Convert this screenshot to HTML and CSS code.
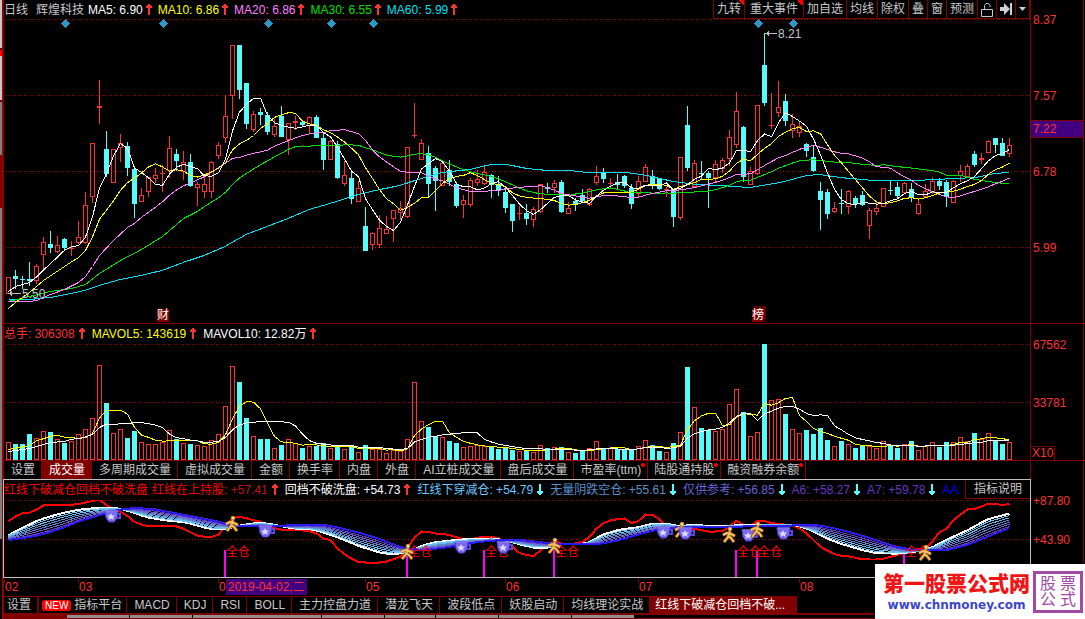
FILE: index.html
```html
<!DOCTYPE html>
<html lang="zh-CN">
<head>
<meta charset="utf-8">
<title>辉煌科技 日线</title>
<link rel="stylesheet" href="styles.css">
</head>
<body>
<svg class="defs" aria-hidden="true">
  <symbol id="up" viewBox="0 0 6 11"><path d="M2 0H4V1H5V2H6V4H4V11H2V4H0V2H1V1H2Z" fill="#ff3232"/></symbol>
  <symbol id="down" viewBox="0 0 6 11"><path d="M2 11H4V10H5V9H6V7H4V0H2V7H0V9H1V10H2Z" fill="#54fcfc"/></symbol>
  <symbol id="cup" viewBox="0 0 18 13">
    <path d="M13 4H16V8H12" fill="none" stroke="#5a48e0" stroke-width="2"/>
    <path d="M1 1H14L13 8L10 12H5L2 8Z" fill="#7a68f0" stroke="#4a3ad0"/>
    <path d="M1 1H14" stroke="#a090ff"/>
    <path d="M7 3L8.200 5.500H11L9 7.500L9.700 10L7 8.600L4.300 10L5 7.500L3 5.500H5.800Z" fill="#dcdcff"/>
  </symbol>
  <symbol id="man" viewBox="0 0 14 16">
    <path d="M8 4L6 10L2 15M6 9L9 11L12 15M1 8L5 6L9 7L13 9" fill="none" stroke="#8a5410" stroke-width="3.500"/>
    <path d="M8 4L6 10L2 15M6 9L9 11L12 15M1 8L5 6L9 7L13 9" fill="none" stroke="#f8c060" stroke-width="2"/>
    <circle cx="8" cy="2" r="2" fill="#ffe080" stroke="#a06a18" stroke-width=".7"/>
  </symbol>
</svg>
<div class="app">
  <div class="edge"></div>
  <main class="main">
    <section class="pane">
      <div class="plot">
        <header class="bar top">
          <div class="legend">
            <span class="name">日线</span><span class="name stock">辉煌科技</span>
            <span class="item white">MA5: 6.90<svg><use href="#up"/></svg></span>
            <span class="item yellow">MA10: 6.86<svg><use href="#up"/></svg></span>
            <span class="item pink">MA20: 6.86<svg><use href="#up"/></svg></span>
            <span class="item green">MA30: 6.55<svg><use href="#up"/></svg></span>
            <span class="item cyan">MA60: 5.99<svg><use href="#up"/></svg></span>
          </div>
          <nav class="tools">
            <button class="flag">九转</button><button class="flag wide">重大事件</button><button>加自选</button><button>均线</button><button>除权</button><button>叠</button><button>窗</button><button>预测</button><button aria-label="锁定"><svg width="12" height="15" viewBox="0 0 12 15"><path d="M.500 7.500H11.500V14.500H.500ZM3.500 7V3.500L5 1.500H7.500L9 3.500V5" fill="none" stroke="#c8c8c8"/></svg></button><button aria-label="末端"><svg width="12" height="12" viewBox="0 0 12 12"><path d="M0 4H4V0L10 6L4 12V8H0ZM10 0H12V12H10Z" fill="#d0d0d0"/></svg></button><button class="slim" aria-label="菜单"><svg width="7" height="4" viewBox="0 0 7 4"><path d="M0 0H7L3.500 4Z" fill="#d0d0d0"/></svg></button>
          </nav>
        </header>
        <div class="chart" id="price"></div>
      </div>
      <div class="axis price-axis">
        <span>8.37</span><span>7.57</span><span>6.78</span><span>5.99</span>
        <b class="last">7.22</b>
      </div>
    </section>
    <section class="pane lined">
      <div class="plot">
        <header class="bar">
          <div class="legend">
            <span class="item red">总手: 306308<svg><use href="#up"/></svg></span>
            <span class="item yellow">MAVOL5: 143619<svg><use href="#up"/></svg></span>
            <span class="item white">MAVOL10: 12.82万<svg><use href="#up"/></svg></span>
          </div>
        </header>
        <div class="chart" id="volume"></div>
      </div>
      <div class="axis volume-axis"><span>67562</span><span>33781</span><b class="scale">X10</b></div>
    </section>
    <section class="pane lined">
      <nav class="tabs">
        <button>设置</button><button class="on">成交量</button><button>多周期成交量</button><button>虚拟成交量</button><button>金额</button><button>换手率</button><button>内盘</button><button>外盘</button><button>AI立桩成交量</button><button>盘后成交量</button><button class="dot">市盈率(ttm)</button><button class="dot">陆股通持股</button><button class="dot">融资融券余额</button>
      </nav>
      <div class="axis"></div>
    </section>
    <section class="pane framed">
      <div class="plot">
        <header class="bar">
          <div class="legend">
            <span class="pure">红线下破减仓回档不破洗盘</span>
            <span class="item deep"><i class="pure">红线在上持股:</i> +57.41<svg><use href="#up"/></svg></span>
            <span class="item white">回档不破洗盘: +54.73<svg><use href="#up"/></svg></span>
            <span class="item sky">红线下穿减仓: +54.79<svg><use href="#down"/></svg></span>
            <span class="item steel">无量阴跌空仓: +55.61<svg><use href="#down"/></svg></span>
            <span class="item slate">仅供参考: +56.85<svg><use href="#down"/></svg></span>
            <span class="item violet">A6: +58.27<svg><use href="#down"/></svg></span>
            <span class="item violet">A7: +59.78<svg><use href="#down"/></svg></span>
            <span class="blue">AA:</span>
          </div>
          <button class="help">指标说明</button>
        </header>
        <div class="chart" id="signal"></div>
      </div>
      <div class="axis signal-axis"><span>+87.80</span><span>+43.90</span></div>
    </section>
    <section class="pane">
      <div class="months" id="months"></div>
      <div class="axis"></div>
    </section>
    <nav class="tabs lower">
      <button>设置</button><button class="platform"><em>NEW</em>指标平台</button><button>MACD</button><button>KDJ</button><button>RSI</button><button>BOLL</button><button>主力控盘力道</button><button>潜龙飞天</button><button>波段低点</button><button>妖股启动</button><button>均线理论实战</button><button class="on">红线下破减仓回档不破...</button>
    </nav>
    <div class="foot"><i></i><i></i><i class="l"></i><i></i><i class="s"></i><i></i><i class="m"></i><i></i></div>
  </main>
  <a class="brand" href="#home">
    <span class="brand-text"><strong>第一股票公式网</strong><span>www.chnmoney.com</span></span>
    <span class="seal"><i>股</i><i>票</i><i>公</i><i>式</i></span>
  </a>
</div>
<script src="chart.js"></script>
</body>
</html>
```
FILE: styles.css
```css
* { box-sizing: border-box; }
body {
  margin: 0;
  background: #000;
  color: #c8c8c8;
  font: 12px/18px "Liberation Sans", "Noto Sans CJK SC", sans-serif;
}
button { font: inherit; color: inherit; background: none; border: 0; margin: 0; padding: 0; }
i, em { font-style: normal; }
.defs { position: absolute; width: 0; height: 0; }
.app { display: flex; min-height: 100vh; position: relative; overflow: hidden; }
.edge {
  flex: 0 0 3px;
  border-right: 1px solid #a00000;
  background: linear-gradient(#c8c8c8 48px, #400000 48px 50px, #f00 50px 56px, #c8c8c8 56px 100px, #700000 100px 102px, #808080 102px 155px, #800000 155px 208px, #808080 208px 539px, #000 539px);
}
.main { flex: 1; min-width: 0; display: flex; flex-direction: column; }

.pane { display: grid; grid-template-columns: minmax(0, 1fr) 55px; border-left: 1px solid #800000; }
.lined { border-top: 1px solid #800000; }
.plot { min-width: 0; }
.bar { display: flex; justify-content: space-between; height: 20px; }
.top { height: 19px; }
.legend { display: flex; flex: 1; min-width: 0; align-items: center; overflow: hidden; white-space: nowrap; }
.item { margin-right: 7px; flex: none; }
.item svg { width: 6px; height: 11px; margin-left: 4px; vertical-align: -1px; shape-rendering: crispEdges; }
.top .item { margin-right: 6px; }
.top .item svg { margin-left: 3px; }
.name { margin-right: 8px; }
.stock { margin-right: 4px; }
.white { color: #fff; }
.yellow { color: #ff0; }
.pink { color: #ff80ff; }
.green { color: #00e000; }
.cyan { color: #00e0f0; }
.red { color: #ff3232; }
.pure { color: #f00; }
.legend > .pure { margin-right: 4px; }
.deep { color: #c81414; }
.sky { color: #6cc8ff; }
.steel { color: #5c90c8; }
.slate { color: #6a64d8; }
.violet { color: #6838c0; }
.blue { color: #0000f0; }

.tools { display: flex; flex: none; height: 19px; border-left: 1px solid #800000; border-bottom: 1px solid #800000; }
.tools button { display: flex; align-items: center; justify-content: center; padding: 0 3px; border-right: 1px solid #800000; }
.tools button.wide { padding: 0 5px; }
.flag { background: linear-gradient(45deg, transparent 50%, #f00 50%) right top / 6px 6px no-repeat; }

.chart { position: relative; }
.chart > svg { display: block; width: 100%; shape-rendering: crispEdges; }
#price > svg { height: 304px; }
#volume > svg { height: 116px; }
#signal > svg { height: 77px; }
.mark { position: absolute; line-height: 14px; white-space: nowrap; }
.mark svg { display: block; }
.mark.stamp { width: 12px; height: 13px; line-height: 13px; background: #800000; color: #fff; }
.mark.twin { box-shadow: 2px -3px #600000; }
.mark.full { color: #f00; }

.axis { position: relative; display: flex; flex-direction: column; border-left: 1px solid #800000; border-right: 1px solid #800000; margin-right: 1px; color: #ff3232; line-height: 14px; padding-left: 2px; }
.price-axis { gap: 62px; padding-top: 13px; }
.last { position: absolute; left: 0; right: 0; top: 120px; height: 18px; padding-left: 2px; line-height: 16px; font-weight: 400; background: #400080; border: solid #800000; border-width: 1px 0; }
.volume-axis { gap: 44px; padding-top: 14px; }
.scale { position: absolute; left: 0; bottom: 0; padding: 0 1px; font-weight: 400; line-height: 13px; border: solid #800000; border-width: 1px 1px 0 0; }
.signal-axis { gap: 25px; padding-top: 15px; border-left-color: #c0c0c0; }

.tabs { display: flex; height: 18px; min-width: 0; white-space: nowrap; }
.tabs button { position: relative; flex: none; padding: 0 6px; border-right: 1px solid #800000; line-height: 17px; }
.tabs button:nth-child(-n+9) { padding-left: 7px; }
.tabs .on { background: #800000; color: #fff; }
.dot::after { content: ""; position: absolute; right: 2px; top: 2px; width: 4px; height: 4px; border-radius: 2px; background: #f00; }

.framed { border-left-color: #c0c0c0; }
.framed .plot { border-top: 1px solid #c0c0c0; border-bottom: 1px solid #c0c0c0; }
.help { flex: none; height: 19px; padding: 0 8px; border-left: 1px solid #800000; border-bottom: 1px solid #800000; }

.months { position: relative; height: 18px; color: #ff3232; }
.months span { position: absolute; top: 1px; padding-left: 1px; line-height: 16px; }
.months span::before { content: ""; position: absolute; left: 0; top: 0; width: 1px; height: 4px; background: #800000; }
.months .picked { padding: 0 2px; background: #400080; white-space: nowrap; }

.tabs.lower { height: 17px; border-left: 1px solid #800000; }
.tabs.lower button { padding: 0 6px 0 7px; border-top: 1px solid #800000; line-height: 16px; }
.tabs.lower button:first-child { padding: 0 6px 0 3px; }
.tabs.lower .platform { padding: 0 4px 0 3px; border-left: 1px solid #800000; }
.tabs.lower .on { padding: 0 11px 0 5px; }
.platform em { display: inline-block; padding: 0 3px; margin-right: 3px; border-radius: 3px; background: #f00; color: #fff; font-size: 10px; line-height: 11px; }
.foot { display: flex; gap: 1px; height: 6px; padding-left: 64px; border-top: 2px solid #800000; border-bottom: 1px solid #800000; background: linear-gradient(#800000, #800000) left / 64px 100% no-repeat; }
.foot i { flex: 0 0 62px; background: #909090; }
.foot .l { flex-basis: 128px; }
.foot .s { flex-basis: 50px; }
.foot .m { flex-basis: 72px; }

.brand { position: absolute; right: 0; bottom: 0; display: flex; align-items: center; gap: 3px; height: 55px; padding: 0 2px 0 8px; background: #fff; text-decoration: none; }
.brand-text { display: flex; flex-direction: column; align-items: center; }
.brand strong { color: #f01414; font-size: 21px; line-height: 26px; font-weight: 900; }
.brand-text span { color: #3c46c8; font: bold 12px/16px "DejaVu Sans", sans-serif; }
.seal { display: grid; grid-template-columns: 16px 16px; gap: 0 4px; justify-content: center; padding: 2px 4px; border: 3px solid #a349a4; color: #a349a4; font-size: 16px; line-height: 16px; }
```
FILE: chart.js
```js
const STEP = 7, X0 = 8.5, LEFT = 4, WIDTH = 1026;

// Each day: kind (r rising, c falling), high, body top, body bottom, low.
const days = `r277 277 293 293|c270 276 279 289|c276 279 279 289|c262 279 281 286|r264 266 280 284|r237 242 254 269|c231 244 248 253|r236 245 251 253|c238 239 248 251|r241 248 248 256
r221 237 242 244|r192 205 242 244|r143 143 196 203|r80 106 108 124|c131 149 174 177|r149 149 182 182|r134 143 147 162|c142 146 168 176|c166 169 204 218|r188 195 201 202
r177 177 191 197|r168 175 178 183|r165 173 173 192|r136 148 170 178|c149 154 161 171|r151 162 171 180|c154 162 186 187|r182 184 187 206|r175 184 191 198|r161 162 191 198
r142 145 155 159|r95 116 137 143|r45 45 95 119|c45 45 90 99|c83 83 124 129|r111 114 129 132|c108 112 115 125|c112 115 132 135|r119 126 134 137|c106 116 137 137
r123 123 139 155|r116 121 123 130|c120 122 125 126|r116 117 125 133|c115 117 138 138|c133 138 160 170|r140 141 159 160|c141 144 178 179|r161 175 183 186|c171 178 199 204
r181 188 201 202|c207 226 251 251|r232 233 244 250|r215 228 244 248|r216 229 233 234|r210 210 218 242|r201 208 212 220|r147 147 216 218|r103 135 135 138|r139 143 159 159
c146 153 184 198|c166 168 181 211|r160 163 185 186|c160 170 182 186|c182 184 206 208|r195 200 204 218|r178 180 204 207|r170 179 182 186|r165 172 183 185|c174 175 185 198
c176 184 190 196|c189 192 208 213|c204 204 221 232|r206 213 213 220|c204 213 219 225|r207 209 219 227|r184 184 211 213|c183 187 189 193|r180 183 187 193|c180 182 212 213
r202 208 213 213|c198 201 204 211|c189 195 201 202|r188 189 204 206|r166 176 182 185|c168 172 179 183|r178 183 183 187|c174 182 185 189|c175 176 186 188|c184 188 204 209
r176 181 193 197|r164 167 181 182|c170 176 186 189|c178 178 189 190|r187 189 189 197|c189 189 217 227|r157 157 217 220|c106 125 168 171|r160 163 186 186|c161 173 173 179
c171 173 178 208|r160 164 177 182|r158 160 168 173|r130 137 158 166|r92 111 144 148|c126 127 177 182|r167 171 184 184|r105 105 173 175|c33 65 103 106|r93 125 125 129
r81 107 112 117|c94 101 121 126|r114 124 130 138|r122 126 132 137|c143 144 151 157|c145 157 171 172|c182 191 200 230|c189 192 214 219|r202 208 211 213|c189 203 203 214
r190 191 206 214|c196 198 204 208|c191 195 205 206|r208 210 225 239|r201 208 211 215|r188 188 206 206|c181 190 190 195|c182 187 196 198|r182 183 192 193|c183 189 198 202
r198 204 213 215|r184 191 196 198|r177 181 192 194|c178 181 186 190|c180 182 197 207|r180 181 202 202|r165 171 175 182|r164 166 176 178|c151 154 165 167|r153 158 160 164
r140 141 152 153|c138 138 145 153|c138 143 156 156|r138 145 153 157`
  .split(/[|\n]/).map(s => {
    const [high, top, bottom, low] = s.slice(1).split(' ').map(Number);
    return { up: s[0] === 'r', high, top, bottom, low };
  });

const volumes = `442 444 444 434 438 431 432 439 443 441 434 429 418 365 403 433 429 438 431 442 444 444 442 430 439 443 444 445 446 440 434 406 366 382 418 436 439 439 448 445
439 443 448 446 446 443 448 446 449 445 452 445 449 449 453 450 451 439 382 421 427 436 437 441 443 447 446 445 446 447 449 448 450 451 451 452 445 448 447 447
452 453 451 448 441 449 448 449 450 449 446 440 445 451 452 443 432 367 407 428 430 431 429 404 389 412 436 432 344 400 399 414 429 433 430 434 428 440 446 441
444 448 446 446 448 441 445 448 444 441 450 446 442 447 442 442 437 441 433 439 433 441 444 442`.split(/\s+/).map(Number);

const xAt = i => X0 + STEP * i;

// Linear interpolation through [x, y] knots.
function along(knots, x) {
  if (x <= knots[0][0]) return knots[0][1];
  for (let k = 1; k < knots.length; k++) {
    const [x1, y1] = knots[k - 1], [x2, y2] = knots[k];
    if (x <= x2) return y1 + (y2 - y1) * (x - x1) / (x2 - x1);
  }
  return knots[knots.length - 1][1];
}
const pairs = s => s.trim().split(/\s+/).map(p => p.split(',').map(Number));

// Moving average; days without enough history come from the lead-in knots.
function average(values, n, lead) {
  return values.map((_, i) => i < n - 1
    ? along(lead, i)
    : values.slice(i - n + 1, i + 1).reduce((a, b) => a + b) / n);
}
const line = (ys, color, w = 1) =>
  `<polyline fill="none" stroke="${color}" stroke-width="${w}" points="${ys.map((y, i) => xAt(i) + ',' + (y + 0.5).toFixed(1)).join(' ')}"/>`;
const grid = y => `<path d="M6 ${y}.5H1030" stroke="#a00000" stroke-dasharray="1 2"/>`;
const svg = (top, height, body) =>
  `<svg viewBox="${LEFT} ${top} ${WIDTH} ${height}" preserveAspectRatio="none">${body}</svg>`;
const mark = (x, y, top, cls, html) =>
  `<span class="mark ${cls}" style="left:${((x - LEFT) / WIDTH * 100).toFixed(3)}%;top:${y - top}px">${html}</span>`;

const RED = '#ff3232', CYAN = '#54fcfc';
const close = days.map(d => d.up ? d.top : d.bottom);

function candle(d, i) {
  const x = 6 + STEP * i, c = x + 2.5;
  if (!d.up || d.bottom - d.top < 3) {
    const color = d.up ? RED : CYAN;
    return `<path d="M${c} ${d.high}V${d.low}" stroke="${color}"/><rect x="${x}" y="${d.top}" width="5" height="${Math.max(1, d.bottom - d.top)}" fill="${color}"/>`;
  }
  return `<path d="M${c} ${d.high}V${d.top}M${c} ${d.bottom}V${d.low}M${x + .5} ${d.top + .5}H${x + 4.5}V${d.bottom + .5}H${x + .5}Z" fill="none" stroke="${RED}"/>`;
}

const ma60 = pairs(`8,299 29,299 50,297 71,293 85,290 99,285 120,279 141,275 162,270 183,262 204,255 225,246 246,234 267,226 288,218 309,209 330,203 358,194
380,189 400,185 421,178 442,172 470,169 490,164 507,164 527,168 547,170 570,170 587,172 627,172 647,175 673,181 697,184 720,185 750,187 780,182 807,175 820,174
840,177 873,180 917,180 953,178 977,177 993,173 1009,172`);

const TOP = 19;
document.getElementById('price').innerHTML =
  mark(22, 287, TOP, '', '5.50') +
  svg(TOP, 304,
    [19, 95, 171, 247].map(grid).join('') +
    [65, 163, 268, 331, 373, 758, 793].map(x => `<path d="M${x + .5} 19L${x + 5} 23.500L${x + .5} 28L${x - 4} 23.500Z" fill="#2b98c8"/>`).join('') +
    days.map(candle).join('') +
    '<path d="M8 293.500H21M765 33.500H777" stroke="#c0c0c0"/><path d="M8 293.500L12 291V296ZM765 33.500L769 31V36Z" fill="#c0c0c0"/>' +
    line(days.map((_, i) => along(ma60, xAt(i))), '#00e0f0') +
    line(average(close, 30, pairs('0,301 3,296 6,291 9,288 11,284 13,273 16,260 19,249 22,236 25,218 27,211 28,206')), '#00e000') +
    line(average(close, 20, pairs('0,301 3,301 4,300 6,294 8,289 10,282 11,276 12,266 13,255 15,240 17,227 18,223')), '#ff80ff') +
    line(average(close, 10, pairs('0,308 1,302 3,292 5,280 8,266')), '#ffff00') +
    line(average(close, 5, pairs('0,291 1,286 3,282')), '#ffffff')) +
  mark(778, 27, TOP, '', '8.21') +
  mark(157, 309, TOP, 'stamp', '财') + mark(752, 309, TOP, 'stamp twin', '榜');

document.getElementById('volume').innerHTML = svg(344, 116,
  grid(344) + grid(402) +
  volumes.map((y, i) => days[i].up
    ? `<path d="M${6.5 + STEP * i} 460V${y + .5}h4V460" fill="none" stroke="${RED}"/><path d="M${6 + STEP * i} 459.500h5" stroke="${RED}"/>`
    : `<rect x="${6 + STEP * i}" y="${y}" width="5" height="${460 - y}" fill="${CYAN}"/>`).join('') +
  line(average(volumes, 5, pairs('0,449 3,445')), '#ffff00') +
  line(average(volumes, 10, pairs('0,451 3,448 6,442 8,441')), '#ffffff'));

const hot = pairs(`8,521 20,513 32,512 43,505 77,504 90,501 99,499 107,505 113,509 124,512 133,521 147,526 173,525 183,528 197,535 210,537 218,535 230,518 242,516 250,519 260,521 277,529
307,530 317,533 323,538 330,539 340,551 353,559 360,562 383,562 393,559 403,555 410,543 417,534 423,530 435,533 448,534 460,538 470,539 483,536 493,536 507,541 520,553 533,556 543,548 552,539
560,543 580,543 590,536 600,524 613,519 625,518 632,523 638,521 645,514 652,514 660,519 667,526 693,528 708,531 722,531 728,527 736,520 742,524 750,526 758,520 767,521 773,523 795,525 807,533
820,546 837,555 850,556 863,559 880,559 900,554 913,549 927,548 940,531 947,528 953,520 967,509 977,508 988,503 997,503 1002,505 1009,503`);
const fast = pairs(`8,535 23,527 40,519 60,513 80,509 103,507 120,508 133,512 147,517 167,520 187,522 200,526 213,529 223,529 240,525 260,522 273,524 293,528 313,529 327,533 343,539 360,546
380,552 393,554 410,551 420,546 433,542 460,539 493,538 507,540 520,544 533,547 550,547 560,544 587,543 603,534 620,529 637,527 653,523 667,523 680,526 693,524 713,526 733,525 767,524 793,524
807,528 827,538 840,543 860,549 877,553 900,553 917,551 930,548 947,539 967,530 987,519 1009,513`);
const slow = pairs(`8,540 23,538 40,535 60,529 80,521 100,515 117,510 133,508 153,509 180,514 200,518 220,522 233,526 273,526 300,525 327,525 360,533 380,539 400,547 420,550 443,548 470,543
500,540 520,540 547,543 567,544 600,544 620,540 640,534 660,529 680,527 720,527 817,525 833,528 853,533 873,539 893,546 913,550 947,550 967,545 987,537 1009,528`);
const ribbon = ['#6cc8ff', '#6cb8f0', '#5c90c8', '#6478d0', '#6a60d0', '#6838c0'];
const xs = days.map((_, i) => xAt(i));
const cup = (x, y) => mark(x - 7, y - 6, 500, '', '<svg width="18" height="13"><use href="#cup"/></svg>');
const man = (x, y) => mark(x - 7, y - 8, 500, '', '<svg width="14" height="16"><use href="#man"/></svg>');
const entries = [225, 407, 484, 554, 736, 757, 904];

document.getElementById('signal').innerHTML = svg(500, 77,
  grid(500) + grid(539) +
  entries.map(x => `<path d="M${x} 550V577" stroke="#ff00ff" stroke-width="2"/>`).join('') +
  line(xs.map(x => along(hot, x)), '#ff0000', 2) +
  line(xs.map(x => along(fast, x)), '#ffffff', 2) +
  ribbon.map((color, k) => line(xs.map(x => along(fast, x) + (along(slow, x) - along(fast, x)) * (k + 1) / 7), color)).join('') +
  line(xs.map(x => along(slow, x)), '#1818ff', 1) +
  line(xs.map(x => along(slow, x) - 1), '#4020e0', 1)) +
  entries.map(x => mark(x + 1, 545, 500, 'full', '全仓')).join('') +
  man(681, 530) + man(232, 524) + man(407, 552) + man(554, 546) + man(729, 535) + man(925, 553) +
  [[111, 516], [265, 531], [461, 547], [503, 547], [663, 532], [685, 533], [748, 535], [783, 533]].map(p => cup(...p)).join('') +
  man(757, 530);

document.getElementById('months').innerHTML =
  [[4, '02'], [78, '03'], [218, '04'], [365, '05'], [505, '06'], [638, '07'], [799, '08']]
    .map(([x, t]) => `<span style="left:${((x - LEFT) / WIDTH * 100).toFixed(3)}%">${t}</span>`).join('') +
  `<span class="picked" style="left:${((226 - LEFT) / WIDTH * 100).toFixed(3)}%">2019-04-02,二</span>`;
```
